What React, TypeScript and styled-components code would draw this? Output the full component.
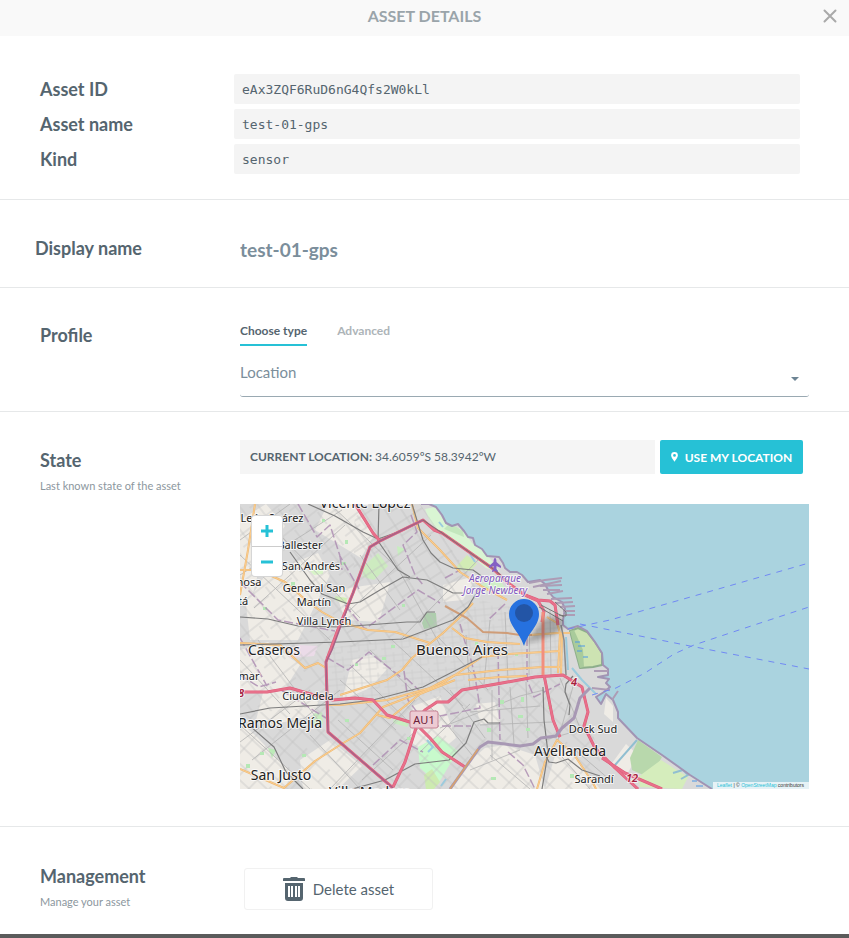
import React from "react";
import styled, { createGlobalStyle } from "styled-components";

const ink = "#55656f";
const slate = "#7b8e9b";
const cyan = "#26c1d6";
const line = "#e6e8e9";

const GlobalStyle = createGlobalStyle`
  *, *::before, *::after { box-sizing: border-box; }
  body { margin: 0; background: #5b5b5b; font-family: Lato, "Liberation Sans", sans-serif; color: ${ink}; }
  button, input, select { font: inherit; color: inherit; }
`;

const Dialog = styled.main`
  background: #fff;
  margin-bottom: 4px;
`;

const Header = styled.header`
  display: grid;
  grid-template-columns: 38px 1fr 38px;
  align-items: center;
  height: 36px;
  padding-bottom: 4px;
  background: #f9f9f9;
`;

const HeaderTitle = styled.h1`
  grid-column: 2;
  margin: 0;
  text-align: center;
  font-size: 16px;
  line-height: 20px;
  font-weight: 700;
  color: #9aa4aa;
`;

const CloseButton = styled.button`
  display: grid;
  place-items: center;
  width: 38px;
  height: 32px;
  padding: 0;
  border: 0;
  background: none;
  color: #a9a9a9;
  cursor: pointer;
`;

const IdentitySection = styled.section`
  display: flex;
  flex-direction: column;
  gap: 5px;
  padding: 38px 49px 25px 40px;
  border-bottom: 1px solid ${line};
`;

const IdentityRow = styled.div`
  display: grid;
  grid-template-columns: 194px 1fr;
  align-items: center;
`;

const IdentityLabel = styled.label`
  font-size: 18px;
  line-height: 30px;
  font-weight: 700;
`;

const CodeInput = styled.input`
  width: 100%;
  height: 30px;
  padding: 0 8px;
  border: 0;
  border-radius: 2px;
  background: #f4f4f4;
  font-family: "DejaVu Sans Mono", "Liberation Mono", monospace;
  font-size: 13px;
  outline: none;
`;

const Section = styled.section<{ $top: number; $bottom: number; $left?: number }>`
  display: grid;
  grid-template-columns: ${(p) => 240 - (p.$left ?? 40)}px minmax(0, 1fr);
  padding: ${(p) => p.$top}px 40px ${(p) => p.$bottom}px ${(p) => p.$left ?? 40}px;
  border-bottom: 1px solid ${line};
  &:last-of-type { border-bottom: 0; }
`;

const SectionHead = styled.div<{ $offset?: number }>`
  padding-top: ${(p) => p.$offset ?? 0}px;
`;

const SectionTitle = styled.h2`
  margin: 0;
  font-size: 18px;
  line-height: 24px;
  font-weight: 700;
`;

const Hint = styled.p`
  margin: 6px 0 0;
  font-size: 11px;
  line-height: 16px;
  color: #8c979e;
`;

const NameInput = styled.input`
  width: 100%;
  height: 28px;
  padding: 0;
  border: 0;
  background: none;
  color: ${slate};
  font-size: 19px;
  font-weight: 700;
  outline: none;
`;

const Tabs = styled.div`
  display: flex;
  gap: 30px;
`;

const Tab = styled.button<{ $active?: boolean }>`
  height: 26px;
  padding: 0 0 2px;
  border: 0;
  border-bottom: 2px solid ${(p) => (p.$active ? cyan : "transparent")};
  background: none;
  color: ${(p) => (p.$active ? ink : "#adb4b8")};
  font-size: 12px;
  line-height: 18px;
  font-weight: 700;
  cursor: pointer;
`;

const SelectWrap = styled.div`
  display: grid;
  align-items: center;
  margin-top: 4px;
  & > * { grid-area: 1 / 1; }
`;

const TypeSelect = styled.select`
  appearance: none;
  width: 100%;
  height: 47px;
  padding: 0 30px 2px 0;
  border: 0;
  border-bottom: 1px solid #9aa9b2;
  border-radius: 3px;
  background: none;
  color: ${slate};
  font-size: 15px;
  outline: none;
`;

const Caret = styled.span`
  justify-self: end;
  margin: 11px 10px 0 0;
  border: 4px solid transparent;
  border-top-color: #6d8494;
  border-bottom: 0;
  pointer-events: none;
`;

const LocationBar = styled.div`
  display: flex;
  gap: 5px;
  margin-right: 6px;
`;

const LocationText = styled.p`
  flex: 1;
  margin: 0;
  padding: 0 10px;
  background: #f5f5f5;
  font-size: 12px;
  line-height: 34px;
`;

const LocateButton = styled.button`
  display: flex;
  align-items: center;
  justify-content: center;
  gap: 7px;
  width: 143px;
  height: 34px;
  padding: 0;
  border: 0;
  border-radius: 2px;
  background: ${cyan};
  color: #fff;
  font-size: 12px;
  font-weight: 700;
  white-space: nowrap;
  cursor: pointer;
`;

const MapFrame = styled.div`
  position: relative;
  height: 285px;
  margin-top: 30px;
  overflow: hidden;
  background: #aad3df;
`;

const MapDrawing = styled.svg`
  display: block;
  width: 100%;
  height: 100%;
`;

const MapText = styled.text<{ $size?: number }>`
  font-family: "Noto Sans", sans-serif;
  font-size: ${(p) => p.$size ?? 11}px;
  fill: #222;
  stroke: rgba(255, 255, 255, 0.7);
  stroke-width: 2px;
  stroke-linejoin: round;
  paint-order: stroke;
  text-anchor: middle;
`;

const AirportText = styled(MapText)`
  font-size: 10px;
  font-style: italic;
  fill: #8055c0;
`;

const RoadText = styled(MapText)`
  font-weight: 600;
  font-style: italic;
  fill: #a5203c;
`;

const ShieldText = styled(MapText)`
  fill: #6b2038;
  stroke: none;
`;

const ZoomControls = styled.div`
  position: absolute;
  top: 11px;
  left: 11px;
  width: 32px;
  border: 1px solid rgba(0, 0, 0, 0.16);
  border-radius: 4px;
  background: #fff;
`;

const ZoomButton = styled.button`
  display: grid;
  place-items: center;
  width: 30px;
  height: 30px;
  padding: 0;
  border: 0;
  background: none;
  color: ${cyan};
  cursor: pointer;
  & + & { border-top: 1px solid #ccc; }
`;

const Attribution = styled.div`
  position: absolute;
  right: 0;
  bottom: 0;
  padding: 0 5px 0 4px;
  background: rgba(255, 255, 255, 0.7);
  color: #333;
  font-family: "Liberation Sans", Arial, sans-serif;
  font-size: 5px;
  line-height: 7px;
  a { color: ${cyan}; text-decoration: none; }
`;

const DeleteButton = styled.button`
  display: flex;
  align-items: center;
  justify-content: center;
  gap: 8px;
  width: 189px;
  height: 42px;
  margin: 4px 0 0 4px;
  border: 1px solid #f1f1f1;
  border-radius: 3px;
  background: #fff;
  font-size: 15px;
  cursor: pointer;
`;

const identity = [
  { id: "asset-id", label: "Asset ID", value: "eAx3ZQF6RuD6nG4Qfs2W0kLl" },
  { id: "asset-name", label: "Asset name", value: "test-01-gps" },
  { id: "asset-kind", label: "Kind", value: "sensor" },
];

const coast =
  "M421 504H429L436 507L442 515L446 523L452 526L458 524L464 531L468 537L473 538L475 545L482 549L487 556L499 557L503 563L505 568L510 572L517 572L522 575L528 582L540 580L545 584L549 592L553 597L562 602L565 609L563 620L563 625L568 629L578 626L587 631L595 642L602 653L603 665L608 669V675L598 677L609 679L606 683L610 687L604 692L596 697L601 704L606 694L613 700L618 712V718L637 738L662 755L690 775L712 789";
const land = `${coast}H240V504Z`;

const beige = [
  "M240 520L266 504L285 526L262 558L250 605L240 600Z",
  "M266 574L318 553L330 575L298 640L250 640L246 604Z",
  "M240 650L268 642L300 665L281 695L240 690Z",
  "M264 689L320 696L314 715L272 725L256 720Z",
  "M240 722L256 736L292 774L284 789H240Z",
  "M300 760L330 740L362 766L338 789H303Z",
  "M328 504L358 504L374 535L361 558L315 530Z",
  "M335 590L390 582L379 622L345 620Z",
  "M443 585L478 575L463 600L443 602Z",
  "M413 706L440 696L456 738L434 756L410 742Z",
  "M466 764L485 748L505 745L535 755L545 789H452Z",
  "M558 746L572 752L600 789H545Z",
  "M476 704L495 702L500 722L480 724Z",
  "M606 698L613 706V722L604 714Z",
  "M610 766L626 744L638 755L625 778Z",
  "M352 660L371 655L388 668L370 688L342 700Z",
];

const greens: [string, string][] = [
  ["M362 568L378 553L388 566L374 580L363 577Z", "#cdebc0"],
  ["M422 623L426 612L436 613L437 627L424 629Z", "#aecdad"],
  ["M425 509L435 507L446 524L462 529L472 543L486 553L500 572L486 568L462 548L444 536L430 522Z", "#d9f5d3"],
  ["M444 529L450 523L463 531L464 537Z", "#c3e6bd"],
  ["M457 566L467 555L477 564L470 571L459 570Z", "#d2ecb5"],
  ["M418 747L438 736L458 751L438 784L420 768Z", "#c8facc"],
  ["M424 775L432 769L440 782L434 789H426Z", "#cdebb0"],
  ["M630 758L638 740L662 757L650 778L632 770Z", "#b8d8ac"],
  ["M638 777L661 760L688 777L682 789L640 787Z", "#d5edbc"],
  ["M480 585L498 577L509 594L486 590Z", "#cfeec8"],
  ["M310 571L323 567L323 574L314 575Z", "#d8f4c8"],
  ["M335 596L347 598L346 604L335 600Z", "#d0efb5"],
  ["M313 714L322 712L323 724L313 725Z", "#c8edc0"],
  ["M394 719L411 721L407 727L393 723Z", "#c8edc0"],
  ["M268 748L276 750L272 758Z", "#bcebb8"],
  ["M397 546L405 549L398 556Z", "#c8edc0"],
];

const railways = [
  "M308 504L335 516L363 532L378 539L398 532L424 520",
  "M379 504L378 541L398 570L410 577",
  "M290 552L310 580L322 594L348 604L360 602L380 590L403 577L427 580L453 593H463",
  "M412 504L423 540L431 553L440 562L453 568L473 570L487 580",
  "M240 617L268 619L298 626L340 627L407 622H420L427 612H435",
  "M240 645L340 642L403 639L453 620L468 607L480 587",
  "M240 714L270 708L340 704L373 700L423 687L482 657",
  "M250 726L274 747L286 772L303 789",
  "M352 789L385 780L415 764L449 760L466 743L474 722L484 719L488 723H500",
  "M543 687L544 720L548 753L542 789",
  "M544 752L549 762L556 763L568 759L582 770L600 776",
  "M573 676L566 684L565 692L570 705L569 715",
];

const borders = [
  "M298 504L317 537L330 525L340 556L359 589",
  "M240 582L278 620L335 631",
  "M240 638L267 686",
  "M240 675L259 687L276 682M281 690L326 718",
  "M326 657L348 670L369 652L402 678",
  "M340 556L342 570M345 605L365 629L418 590L440 603",
  "M411 515L417 532L403 545L415 575L424 586",
  "M404 671L408 700L423 720M406 678L423 694",
  "M460 624L465 642L471 660L475 676L480 708L440 716",
  "M505 604L488 620M527 637V680L534 697L560 684",
  "M498 650L500 740",
  "M373 765L400 740L423 752M430 726H471",
  "M508 752L523 765L535 789",
  "M445 578L460 570",
];

const oranges = [
  "M255 504L248 550L240 595",
  "M240 570H258L285 582L307 601L322 612L340 622L368 630L395 632L430 643",
  "M240 643L280 645L305 668L318 663L326 668",
  "M412 504L418 528L440 550L460 572L483 587L507 600",
  "M473 603L460 617L443 633L412 658L402 670L387 680L340 695",
  "M452 628L465 638L487 642L520 644",
  "M482 657L507 654L543 652L560 651",
  "M455 675L500 670L542 667L562 667",
  "M326 705L340 705L387 700L430 688L455 675",
  "M240 769L284 788L315 761L340 745L360 733L383 707L440 685L482 657",
  "M377 715L390 718L420 694L455 680",
  "M468 680L500 677L527 676",
  "M547 617L557 623L560 633L558 673",
  "M562 632L561 676",
  "M537 789L545 762L557 740L573 753L593 783L596 789",
  "M530 635L557 633H570",
];

const motorways = [
  "M355 504L373 533L380 541",
  "M393 788L328 732L326 662L337 632L353 593L370 547L380 541L423 520L434 530L442 533L462 547L492 568L508 583L525 595L538 600L550 601L555 605L558 625",
  "M240 692L267 692L290 688L307 693L333 700L355 698L373 700L387 715L413 723",
  "M420 728L430 738L442 752L465 767",
  "M417 725L405 762L393 787",
  "M413 723L425 710L437 702H448L462 690L502 683L535 677L563 675L582 687L588 712L584 726L595 748L615 768L638 789",
  "M602 758L625 773L662 789",
  "M525 595L538 601L544 611L542 622",
  "M544 675L548 695L553 720L560 737",
];

const ferries = [
  "M568 629L610 620L680 600L809 563",
  "M580 624L610 630L690 646L809 669",
  "M592 695L616 688L645 673L674 654L694 645L742 629L809 607",
];

const places: [string, number, number, number][] = [
  ["Vicente López", 365, 508, 14],
  ["León Suárez", 272, 522, 11],
  ["Ballester", 300, 549, 11],
  ["San Andrés", 311, 570, 11],
  ["General San", 314, 592, 11],
  ["Martín", 314, 606, 11],
  ["Villa Lynch", 324, 625, 11],
  ["Caseros", 274, 655, 14],
  ["Buenos Aires", 462, 655, 15],
  ["Ciudadela", 308, 700, 11],
  ["Ramos Mejía", 280, 728, 14],
  ["San Justo", 281, 780, 14],
  ["Villa Madero", 370, 797, 14],
  ["Dock Sud", 593, 733, 11],
  ["Avellaneda", 570, 756, 14],
  ["Sarandí", 594, 783, 11],
];

const Lines = ({ paths, ...style }: { paths: string[] } & React.SVGProps<SVGGElement>) => (
  <g fill="none" strokeLinejoin="round" {...style}>
    {paths.map((d) => <path key={d} d={d} />)}
  </g>
);

function CityMap() {
  return (
    <MapDrawing viewBox="240 504 569 285" preserveAspectRatio="xMidYMid slice" role="img" aria-label="Map of Buenos Aires">
      <defs>
        <clipPath id="land"><path d={land} /></clipPath>
        <pattern id="streets-west" width="29" height="27" patternUnits="userSpaceOnUse" patternTransform="rotate(-38)">
          <path d="M0 3H29M0 14H19M8 0V27M22 5V20" stroke="#c3c3c3" strokeWidth="0.7" fill="none" />
        </pattern>
        <pattern id="streets-north" width="26" height="33" patternUnits="userSpaceOnUse" patternTransform="rotate(57)">
          <path d="M0 7H26M0 21H26M6 0V33M18 7V21" stroke="#bfbfbf" strokeWidth="0.7" fill="none" />
        </pattern>
        <pattern id="streets-center" width="17" height="19" patternUnits="userSpaceOnUse" patternTransform="rotate(-5)">
          <path d="M0 3H17M0 9H17M0 15H11M4 0V19M12 0V15" stroke="#cacaca" strokeWidth="0.6" fill="none" />
        </pattern>
        <pattern id="streets-south" width="31" height="26" patternUnits="userSpaceOnUse" patternTransform="rotate(43)">
          <path d="M0 5H31M0 17H31M7 0V26M22 0V17" stroke="#c2c2c2" strokeWidth="0.7" fill="none" />
        </pattern>
        <filter id="shadow-blur"><feGaussianBlur stdDeviation="2" /></filter>
      </defs>

      <rect x="240" y="504" width="569" height="285" fill="#aad3df" />
      <path d={land} fill="#d9d9d9" />
      <g clipPath="url(#land)">
        {beige.map((d) => <path key={d} d={d} fill="#efece6" />)}
        <path d="M284 650L300 645L318 646L314 656L290 658Z" fill="#ebdbe8" />
        {greens.map(([d, fill]) => <path key={d} d={d} fill={fill} />)}
        <path d="M240 504H355L380 541L353 593L326 662V706L240 714Z" fill="url(#streets-west)" />
        <path d="M355 504H420L480 590L470 630L330 650L353 593Z" fill="url(#streets-north)" />
        <path d="M330 648L430 632L480 600L568 620L566 676L460 690L380 702L326 706Z" fill="url(#streets-center)" />
        <path d="M240 714L330 706L400 702L462 690L563 675L600 750L600 789H240Z" fill="url(#streets-south)" />
        <Lines
          stroke="#b2b2b2"
          strokeWidth="0.8"
          paths={[
            "M240 540L290 504M240 575L342 510M254 608L345 525M240 555L330 640M280 535L360 618",
            "M330 504L410 580M350 610L431 535M388 550L440 645M400 640L480 558M360 555L400 610",
            "M240 660L290 714M258 640L318 720M240 742L310 690M252 760L340 690M240 725L310 789",
            "M310 735L360 789M338 720L393 770M330 789L415 700M362 780L430 718M420 752L470 704",
            "M340 680L396 730M350 665L412 725M370 650L435 712M392 640L463 706M438 637L488 690",
            "M435 710L472 755M450 690L485 738M492 690V760M510 687L514 744M526 682L528 738",
            "M440 728L520 696L544 690M470 712L540 706M480 725L552 722M490 755L530 789M470 770L520 750",
            "M560 678L580 728M574 683L558 740M562 757L590 789M574 749L610 780M545 740L580 730",
            "M530 610L529 675M550 610L551 675M505 612L508 680M490 620L484 684M466 635L470 690",
          ]}
        />
        <path d="M570 631L578 628L587 632L595 642L602 653L602 665L593 667L580 668Z" fill="#cde3b2" stroke="#8dae8b" strokeWidth="2" strokeLinejoin="round" />
        <path d="M570 631L574 630L583 650L584 667L580 668Z" fill="#a9cb9b" />
        <path d="M575 642H580M578 646H585M577 651H582M583 657H588M692 781H697M696 786H703M674 763H677" stroke="#4a97e8" fill="none" />
        <path d="M566 637L568 670M572 668L582 680L596 694M427 740L433 747L428 752M446 779L441 786M470 554L475 562M439 522L443 527" stroke="#9ccbdd" strokeWidth="2" fill="none" />
        <path d="M673 773L683 770L688 775L681 779M615 765L637 740" stroke="#91bfd1" strokeWidth="2" fill="none" />
        <path
          fill="#b5e8b5"
          d="M322 519h3v3h-3zM341 562h5v3h-5zM291 582h4v4h-4zM263 607h4v3h-4zM355 663h3v3h-3zM382 657h4v3h-4zM345 719h4v3h-4zM302 754h4v3h-4zM500 700h4v4h-4zM487 728h4v4h-4zM521 697h3v5h-3zM518 715h5v3h-5zM491 777h5v3h-5zM570 774h4v4h-4zM526 728h4v3h-4zM402 604h3v3h-3zM391 645h4v3h-4zM475 642h3v3h-3zM515 653h3v3h-3zM548 705h4v4h-4zM273 540h4v4h-4zM345 540h3v4h-3zM246 764h4v4h-4zM260 752h4v3h-4zM407 737h4v3h-4zM583 722h4v3h-4z"
        />
        <Lines paths={borders} stroke="#ae8fb3" strokeWidth="1.500" strokeDasharray="9 3" opacity="0.85" />
        <Lines paths={oranges} stroke="#edb974" strokeWidth="2" />
        <Lines paths={oranges} stroke="#fbcd8f" strokeWidth="1" />
        <path d="M445 606L467 618L483 632L507 633L520 635L532 635" stroke="#cf9d78" fill="none" strokeWidth="2" />
        <Lines paths={railways} stroke="#7d7d7d" strokeWidth="1.200" />
        <Lines paths={motorways} stroke="#de5c7b" strokeWidth="3" />
        <Lines paths={motorways} stroke="#e8708a" strokeWidth="2" />
        <path d="M380 541L423 520M380 541L370 547L353 593L332 650L326 662L328 732L393 788" fill="none" stroke="#a66287" strokeWidth="1.500" />
        <path d="M423 520L442 533L462 547L492 568L510 583" fill="none" stroke="#8d6b72" strokeWidth="1.200" />
        <path d="M543 612V675" fill="none" stroke="#f28f7e" strokeWidth="3" />
        <path d="M561 625L564 640L566 675" fill="none" stroke="#8b8b8b" strokeWidth="1.500" />
        <path d="M450 789L480 747L488 742L505 744L520 746L533 744L541 738L556 736L562 728L574 718L580 698L590 688" fill="none" stroke="#a898b4" strokeWidth="3" strokeLinejoin="round" />
        <path d="M450 789L478 749" fill="none" stroke="#d9a36b" strokeWidth="1.500" />
      </g>
      <path d={coast} fill="none" stroke="#a194b4" strokeWidth="2" strokeLinejoin="round" />
      <path
        d="M529 583L545 580L562 578M533 587L561 581M540 586L562 585M543 590L560 590M547 594L563 591M551 599L572 598M556 603L573 602M560 607L575 606M563 611L575 611M563 615L575 615M594 671L608 671M592 688L610 690M612 700L618 691"
        stroke="#ad9cb5"
        strokeWidth="2"
        fill="none"
      />
      <path d="M541 605L564 617M539 607L563 621M555 602L566 612V616L559 615" stroke="#777" strokeWidth="1" fill="none" />
      <Lines paths={ferries} stroke="#7189f4" strokeWidth="1" strokeDasharray="6 6" />

      <path d="M495 558C496 558 496.500 560 496.500 562L501 566V568L496.500 566V569L498 571V572L495 571L492 572V571L493.500 569V566L489 568V566L493.500 562C493.500 560 494 558 495 558Z" fill="#8461c4" />
      {places.map(([name, x, y, size]) => <MapText key={name} x={x} y={y} $size={size}>{name}</MapText>)}
      <AirportText x="495" y="582">Aeroparque</AirportText>
      <AirportText x="495" y="594">Jorge Newbery</AirportText>
      <MapText x="249" y="586">nosa</MapText>
      <MapText x="243" y="605">tá</MapText>
      <MapText x="249" y="680">mar</MapText>
      <RoadText x="241" y="697">8</RoadText>
      <RoadText x="574" y="686">4</RoadText>
      <RoadText x="632" y="782">12</RoadText>
      <rect x="410" y="711" width="28" height="17" rx="2" fill="#edcbd3" stroke="#c78496" />
      <ShieldText x="424" y="724">AU1</ShieldText>

      <path d="M526 643L540 623C546 615 561 614 563 622C565 632 547 639 526 643Z" fill="#333" opacity="0.3" filter="url(#shadow-blur)" />
      <path d="M524 646C519 631 509 626 509 614A15 15 0 0 1 539 614C539 626 529 631 524 646Z" fill="#2671df" />
      <circle cx="524" cy="613" r="9" fill="#2355a6" />
    </MapDrawing>
  );
}

export default function App() {
  return (
    <>
      <GlobalStyle />
      <Dialog>
        <Header>
          <HeaderTitle>ASSET DETAILS</HeaderTitle>
          <CloseButton aria-label="Close">
            <svg width="14" height="14" viewBox="0 0 14 14" fill="none" stroke="currentColor" strokeWidth="2" strokeLinecap="round">
              <path d="M1.500 1.500L12.500 12.500M12.500 1.500L1.500 12.500" />
            </svg>
          </CloseButton>
        </Header>

        <IdentitySection>
          {identity.map((item) => (
            <IdentityRow key={item.id}>
              <IdentityLabel htmlFor={item.id}>{item.label}</IdentityLabel>
              <CodeInput id={item.id} value={item.value} readOnly />
            </IdentityRow>
          ))}
        </IdentitySection>

        <Section $top={35} $bottom={24} $left={35}>
          <SectionHead $offset={1}>
            <SectionTitle as="label" htmlFor="display-name">Display name</SectionTitle>
          </SectionHead>
          <NameInput id="display-name" defaultValue="test-01-gps" />
        </Section>

        <Section $top={32} $bottom={14}>
          <SectionHead $offset={3}>
            <SectionTitle id="profile-title">Profile</SectionTitle>
          </SectionHead>
          <div>
            <Tabs role="tablist">
              <Tab role="tab" aria-selected="true" $active>Choose type</Tab>
              <Tab role="tab" aria-selected="false">Advanced</Tab>
            </Tabs>
            <SelectWrap>
              <TypeSelect aria-labelledby="profile-title">
                <option>Location</option>
              </TypeSelect>
              <Caret />
            </SelectWrap>
          </div>
        </Section>

        <Section $top={28} $bottom={37}>
          <SectionHead $offset={8}>
            <SectionTitle>State</SectionTitle>
            <Hint>Last known state of the asset</Hint>
          </SectionHead>
          <div>
            <LocationBar>
              <LocationText><strong>CURRENT LOCATION:</strong> 34.6059ºS 58.3942ºW</LocationText>
              <LocateButton>
                <svg width="7" height="10" viewBox="0 0 7 10">
                  <path fillRule="evenodd" fill="currentColor" d="M3.500 0A3.400 3.400 0 0 1 6.900 3.400C6.900 5.500 4.600 7.500 3.500 9.800C2.400 7.500 .1 5.500 .1 3.400A3.400 3.400 0 0 1 3.500 0ZM3.500 2A1.400 1.400 0 1 0 3.500 4.800A1.400 1.400 0 0 0 3.500 2Z" />
                </svg>
                USE MY LOCATION
              </LocateButton>
            </LocationBar>
            <MapFrame>
              <CityMap />
              <ZoomControls>
                <ZoomButton aria-label="Zoom in">
                  <svg width="12" height="12" viewBox="0 0 12 12" stroke="currentColor" strokeWidth="3"><path d="M0 6H12M6 0V12" /></svg>
                </ZoomButton>
                <ZoomButton aria-label="Zoom out">
                  <svg width="12" height="12" viewBox="0 0 12 12" stroke="currentColor" strokeWidth="3"><path d="M0 6H12" /></svg>
                </ZoomButton>
              </ZoomControls>
              <Attribution>
                <a href="#leaflet">Leaflet</a> | © <a href="#openstreetmap">OpenStreetMap</a> contributors
              </Attribution>
            </MapFrame>
          </div>
        </Section>

        <Section $top={37} $bottom={24}>
          <SectionHead>
            <SectionTitle>Management</SectionTitle>
            <Hint>Manage your asset</Hint>
          </SectionHead>
          <div>
            <DeleteButton>
              <svg width="22" height="24" viewBox="0 0 22 24" fill="currentColor">
                <path d="M1 1H7L8 0H14L15 1H21Q22 1 22 2V4H0V2Q0 1 1 1Z" />
                <path fillRule="evenodd" d="M2 6H20V21Q20 24 17 24H5Q2 24 2 21ZM5 9V20H7V9ZM8 9V20H10V9ZM12 9V20H14V9ZM15 9V20H17V9Z" />
              </svg>
              Delete asset
            </DeleteButton>
          </div>
        </Section>
      </Dialog>
    </>
  );
}
